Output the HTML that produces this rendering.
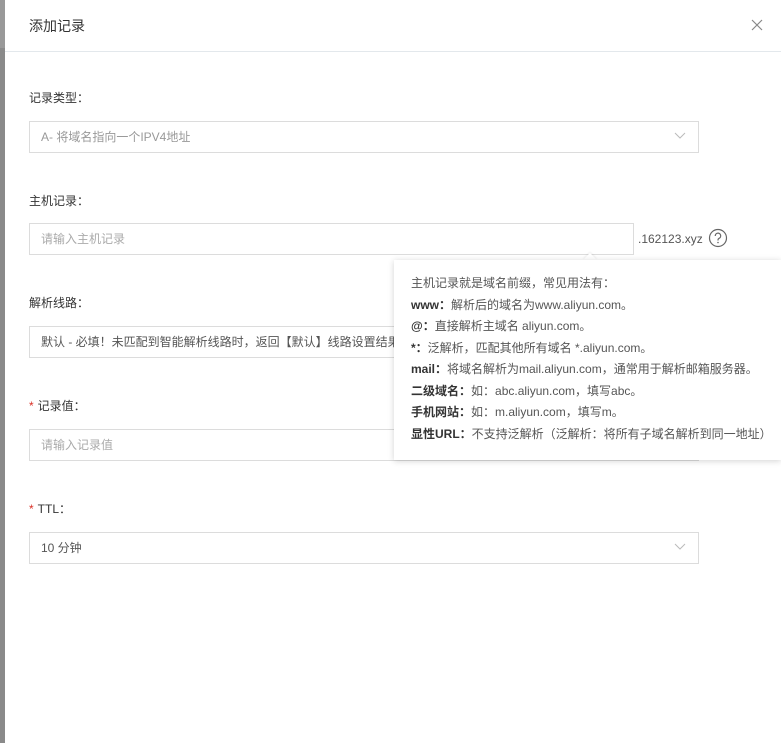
<!DOCTYPE html>
<html><head><meta charset="utf-8"><style>
*{margin:0;padding:0;box-sizing:border-box}
html,body{width:781px;height:743px;overflow:hidden;background:#fff;font-family:"Liberation Sans","Noto Sans CJK SC",sans-serif;font-size:12px;color:#333}
.strip{position:absolute;left:0;top:0;width:5px;height:743px;background:#8a8a8a}
.strip .a{position:absolute;top:0;height:48px;width:5px;background:#999}
.hdr{position:absolute;left:5px;top:0;right:0;height:52px;border-bottom:1px solid #e3e8ec}
.title{position:absolute;left:29px;top:16px;font-size:14px;color:#333}
.close{position:absolute;left:751px;top:19px}
.lbl{position:absolute;left:29px;color:#333}
.lbl .s{color:#d93026;margin-right:4px}
.box{position:absolute;left:29px;width:670px;height:32px;border:1px solid #dcdcdc;padding-left:11px;line-height:30px;color:#999}
.box.v{color:#555}
.chev{position:absolute;right:12px;top:10px}
.pop{position:absolute;left:394px;top:260px;width:387px;height:200px;background:#fff;box-shadow:0 1px 6px rgba(0,0,0,.18);padding:13px 0 0 17px;line-height:21.5px;color:#555;font-size:12px}
.pop b{color:#333;font-weight:bold}
.arr{position:absolute;left:585px;top:255px;width:10px;height:10px;background:#fff;transform:rotate(45deg);box-shadow:-1px -1px 2px rgba(0,0,0,.06)}
</style></head><body>
<div class="strip"><div class="a"></div></div>
<div class="hdr"></div>
<div class="title">添加记录</div>
<svg class="close" width="12" height="12" viewBox="0 0 12 12"><path d="M1 1L11 11M11 1L1 11" stroke="#888" stroke-width="1.2"/></svg>

<div class="lbl" style="top:89px">记录类型：</div>
<div class="box" style="top:121px">A- 将域名指向一个IPV4地址<svg class="chev" width="12" height="8" viewBox="0 0 12 8"><path d="M1 1L6 6L11 1" fill="none" stroke="#bbb"/></svg></div>

<div class="lbl" style="top:192px">主机记录：</div>
<div class="box" style="top:223px;width:605px;color:#aaa">请输入主机记录</div>
<div style="position:absolute;left:638px;top:232px;color:#555">.162123.xyz</div>
<svg style="position:absolute;left:708px;top:228px" width="20" height="20" viewBox="0 0 20 20"><circle cx="10" cy="10" r="8.5" fill="none" stroke="#666" stroke-width="1.2"/><path d="M7.3 8a2.7 2.7 0 1 1 3.8 2.3c-.8.4-1.1.8-1.1 1.6v.6" fill="none" stroke="#666" stroke-width="1.2"/><circle cx="10" cy="14.5" r=".8" fill="#666"/></svg>

<div class="lbl" style="top:294px">解析线路：</div>
<div class="box v" style="top:326px">默认 - 必填！未匹配到智能解析线路时，返回【默认】线路设置结果</div>

<div class="lbl" style="top:397px"><span class="s">*</span>记录值：</div>
<div class="box" style="top:429px;color:#aaa">请输入记录值</div>

<div class="lbl" style="top:500px"><span class="s">*</span>TTL：</div>
<div class="box v" style="top:532px">10 分钟<svg class="chev" width="12" height="8" viewBox="0 0 12 8"><path d="M1 1L6 6L11 1" fill="none" stroke="#bbb"/></svg></div>

<div class="arr"></div>
<div class="pop">
<div>主机记录就是域名前缀，常见用法有：</div>
<div><b>www：</b>解析后的域名为www.aliyun.com。</div>
<div><b>@：</b>直接解析主域名 aliyun.com。</div>
<div><b>*：</b>泛解析，匹配其他所有域名 *.aliyun.com。</div>
<div><b>mail：</b>将域名解析为mail.aliyun.com，通常用于解析邮箱服务器。</div>
<div><b>二级域名：</b>如：abc.aliyun.com，填写abc。</div>
<div><b>手机网站：</b>如：m.aliyun.com，填写m。</div>
<div><b>显性URL：</b>不支持泛解析（泛解析：将所有子域名解析到同一地址）</div>
</div>
</body></html>
